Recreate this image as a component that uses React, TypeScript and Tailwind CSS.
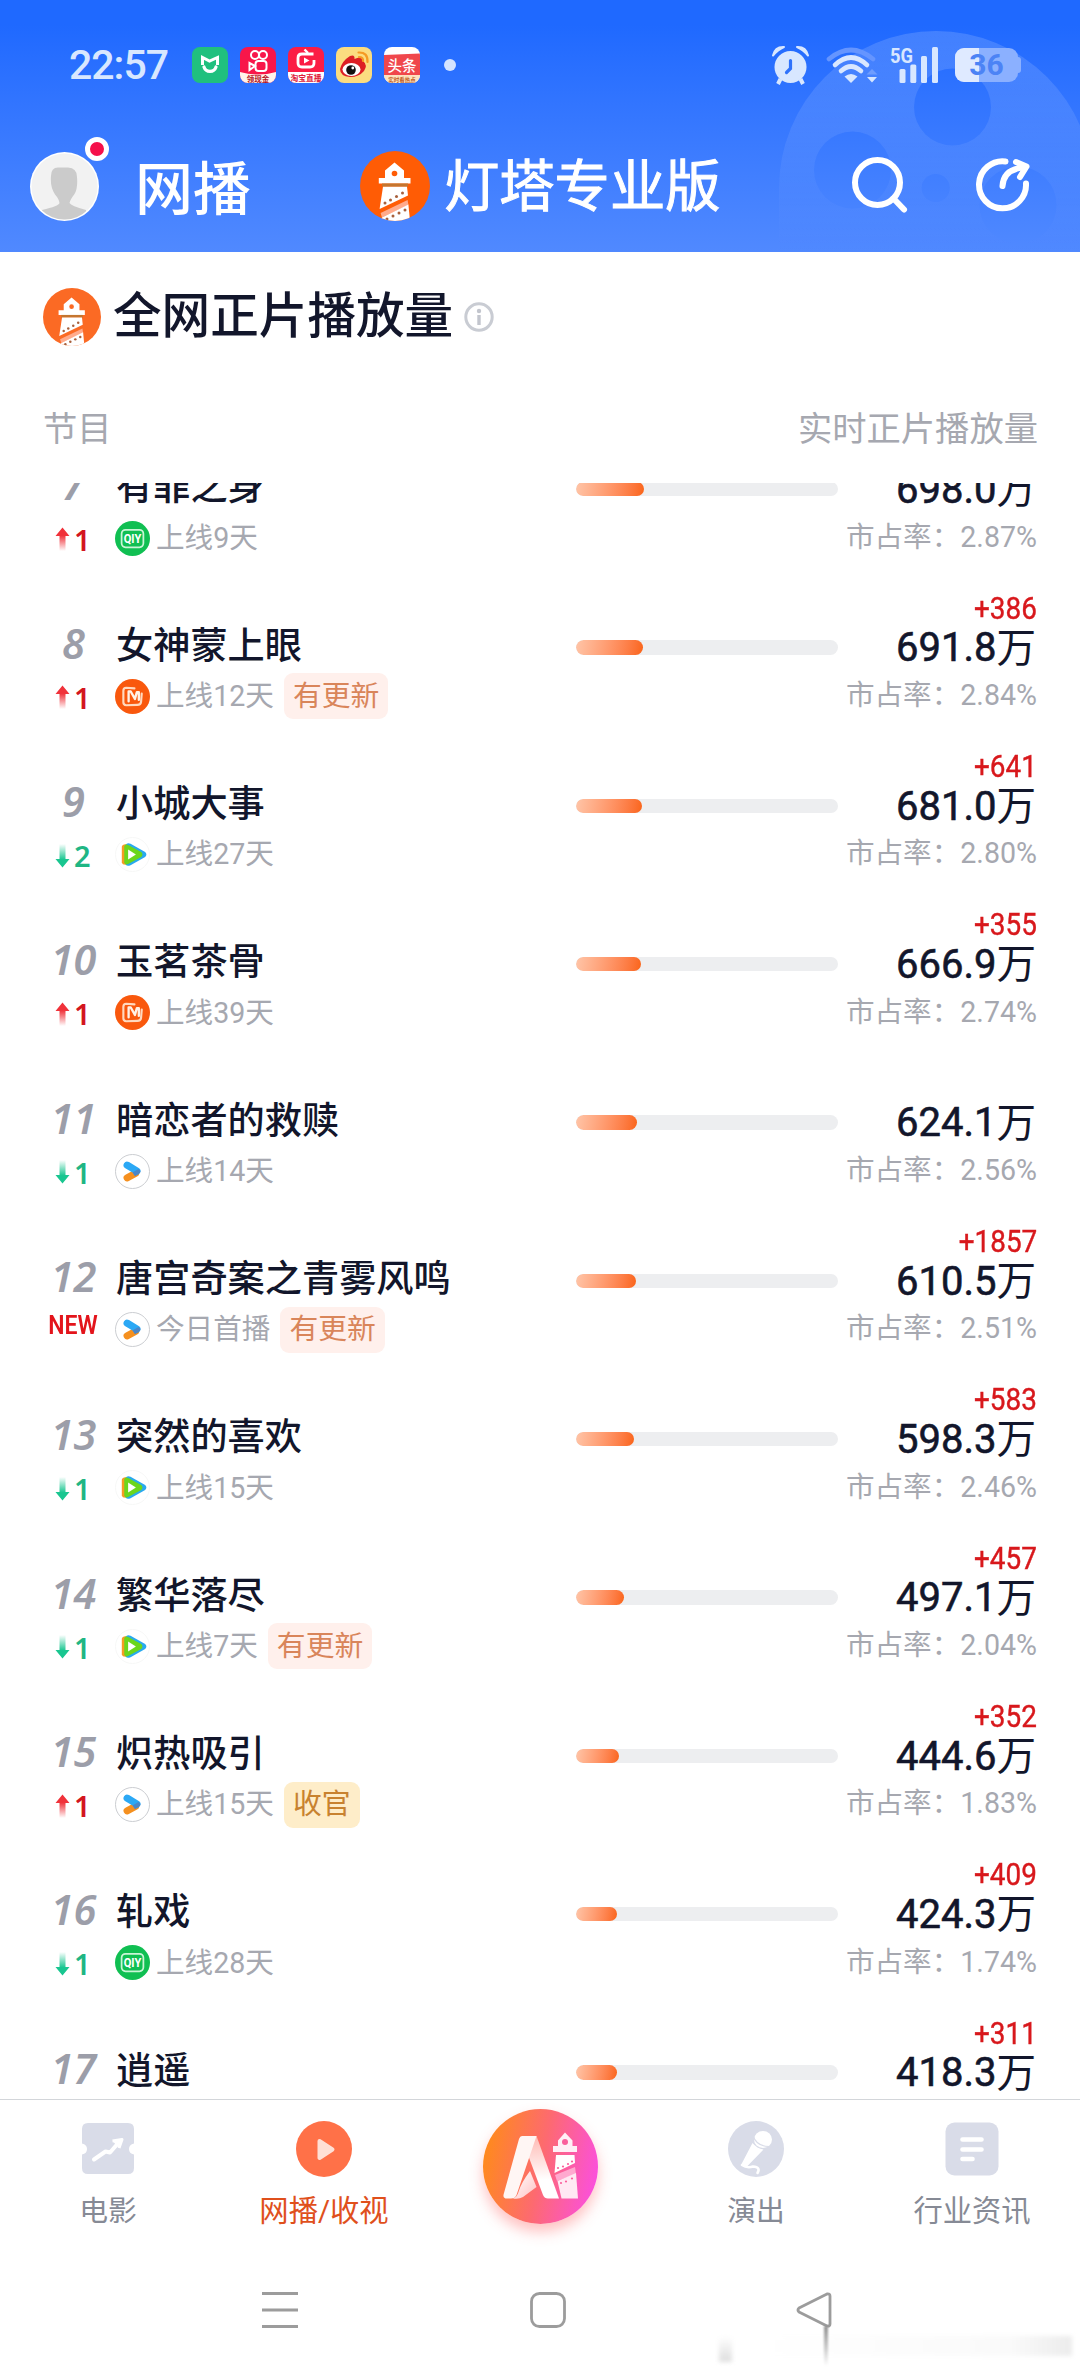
import clsx from 'clsx';

type Platform = 'iqiyi' | 'mango' | 'tencent' | 'youku';

interface Show {
  rank: number;
  title: string;
  platform: Platform;
  online: string;
  change: number | 'NEW';
  tag?: 'update' | 'finale';
  delta?: string;
  views: string;
  share: string;
  bar: number;
}

const shows: Show[] = [
  { rank: 7, title: '有罪之身', platform: 'iqiyi', online: '上线9天', change: 1, views: '698.0', share: '2.87%', bar: 68 },
  { rank: 8, title: '女神蒙上眼', platform: 'mango', online: '上线12天', change: 1, tag: 'update', delta: '+386', views: '691.8', share: '2.84%', bar: 67 },
  { rank: 9, title: '小城大事', platform: 'tencent', online: '上线27天', change: -2, delta: '+641', views: '681.0', share: '2.80%', bar: 66 },
  { rank: 10, title: '玉茗茶骨', platform: 'mango', online: '上线39天', change: 1, delta: '+355', views: '666.9', share: '2.74%', bar: 65 },
  { rank: 11, title: '暗恋者的救赎', platform: 'youku', online: '上线14天', change: -1, views: '624.1', share: '2.56%', bar: 61 },
  { rank: 12, title: '唐宫奇案之青雾风鸣', platform: 'youku', online: '今日首播', change: 'NEW', tag: 'update', delta: '+1857', views: '610.5', share: '2.51%', bar: 60 },
  { rank: 13, title: '突然的喜欢', platform: 'tencent', online: '上线15天', change: -1, delta: '+583', views: '598.3', share: '2.46%', bar: 58 },
  { rank: 14, title: '繁华落尽', platform: 'tencent', online: '上线7天', change: -1, tag: 'update', delta: '+457', views: '497.1', share: '2.04%', bar: 48 },
  { rank: 15, title: '炽热吸引', platform: 'youku', online: '上线15天', change: 1, tag: 'finale', delta: '+352', views: '444.6', share: '1.83%', bar: 43 },
  { rank: 16, title: '轧戏', platform: 'iqiyi', online: '上线28天', change: -1, delta: '+409', views: '424.3', share: '1.74%', bar: 41 },
  { rank: 17, title: '逍遥', platform: 'iqiyi', online: '', change: 0, delta: '+311', views: '418.3', share: '', bar: 41 },
];

function LighthouseLogo({ id, color, className }: { id: string; color: string; className: string }) {
  return (
    <svg viewBox="0 0 70 70" className={className}>
      <clipPath id={id}>
        <circle cx="35" cy="35" r="35" />
      </clipPath>
      <g clipPath={`url(#${id})`}>
        <rect width="70" height="70" fill={color} />
        <path d="M34.5 11.5 L44 19.5 V27 H50.5 V32.5 H18.8 V27 H25 V19.5 Z" fill="#fff" />
        <rect x="22" y="32.5" width="26" height="3.2" fill="#c4762f" />
        <path d="M23 35.7 H47 L48 44.5 L19.6 58 Z" fill="#fff" />
        <path d="M47.6 49 L48.4 54 L22 66.5 L20.6 62 Z" fill="#ffab8c" />
        <path d="M48.4 53.5 L50 70 H20 L22 66.5 Z" fill="#fff" />
        <circle cx="34.5" cy="22.5" r="2.8" fill={color} />
        <g fill="#a8603c">
          <circle cx="25" cy="52" r="1.5" />
          <circle cx="30.5" cy="49" r="1.5" />
          <circle cx="36.5" cy="45.5" r="1.5" />
          <circle cx="42.5" cy="42" r="1.5" />
          <circle cx="27" cy="68" r="1.5" />
          <circle cx="33" cy="65" r="1.5" />
          <circle cx="39" cy="62" r="1.5" />
          <circle cx="45" cy="59" r="1.5" />
        </g>
      </g>
    </svg>
  );
}

function ReelBackdrop() {
  return (
    <svg viewBox="0 0 310 252" className="absolute top-0 right-0 h-[252px] w-[310px]">
      <defs>
        <linearGradient id="reelFade" x1="0" y1="0" x2="0" y2="252" gradientUnits="userSpaceOnUse">
          <stop offset="0.1" stopColor="#fff" stopOpacity="0.16" />
          <stop offset="0.45" stopColor="#fff" stopOpacity="0.1" />
          <stop offset="0.75" stopColor="#fff" stopOpacity="0.04" />
          <stop offset="1" stopColor="#fff" stopOpacity="0" />
        </linearGradient>
        <mask id="reelHoles">
          <rect width="310" height="252" fill="#fff" />
          <circle cx="182.5" cy="107" r="38.5" fill="#000" />
          <circle cx="82.5" cy="170" r="38.5" fill="#000" />
          <circle cx="165.7" cy="188" r="14" fill="#000" />
          <circle cx="248" cy="205" r="38.5" fill="#000" />
        </mask>
      </defs>
      <path d="M9 252 V188 A157 157 0 0 1 323 188 V252 Z" fill="url(#reelFade)" mask="url(#reelHoles)" />
    </svg>
  );
}

function StatusBar() {
  return (
    <div className="relative flex h-[130px] items-center pl-[69px] pr-[59px]">
      <span className="w-[123px] text-[41px] font-medium leading-none tracking-[-1px] text-[#d8e7ff]">22:57</span>
      <div className="flex items-center gap-3">
        <svg viewBox="0 0 36 36" className="size-9">
          <rect width="36" height="36" rx="8" fill="#20c07e" />
          <path d="M10.5 18 V10.5 L17.5 14 L25.5 10.5 V18" fill="none" stroke="#fff" strokeWidth="3" />
          <path d="M12 20 A6.3 6.3 0 0 0 24 20" fill="none" stroke="#fff" strokeWidth="3.2" strokeLinecap="round" />
        </svg>
        <svg viewBox="0 0 36 36" className="size-9">
          <clipPath id="ks">
            <rect width="36" height="36" rx="8" />
          </clipPath>
          <g clipPath="url(#ks)">
            <rect width="36" height="36" fill="#f8164a" />
            <path d="M0 25 Q18 30 36 25 V36 H0 Z" fill="#fff3ea" />
            <g fill="none" stroke="#fff" strokeWidth="2">
              <circle cx="15" cy="8" r="4" />
              <circle cx="23" cy="8" r="4" />
              <rect x="15.5" y="14" width="11" height="10" rx="3" />
              <path d="M15 19 L9.5 16 V23 Z" />
            </g>
            <text x="18" y="34.5" textAnchor="middle" fontSize="7.5" fontWeight="700" fill="#b3121f">领现金</text>
          </g>
        </svg>
        <svg viewBox="0 0 36 36" className="size-9">
          <clipPath id="tb">
            <rect width="36" height="36" rx="8" />
          </clipPath>
          <g clipPath="url(#tb)">
            <rect width="36" height="36" fill="#fb1d45" />
            <rect y="25" width="36" height="11" fill="#fff" />
            <path d="M25.5 7 H14 Q10 7 10 11 V16 Q10 20 14 20 H22 Q26 20 26 16 V13" fill="none" stroke="#fff" strokeWidth="2.8" />
            <path d="M16.5 2.5 L20 6" stroke="#fff" strokeWidth="2.4" />
            <path d="M16 10.5 L21.5 13.5 L16 16.5 Z" fill="#fff" />
            <text x="18" y="33.5" textAnchor="middle" fontSize="7.8" fontWeight="700" fill="#e01b3c">淘宝直播</text>
          </g>
        </svg>
        <svg viewBox="0 0 36 36" className="size-9">
          <rect width="36" height="36" rx="8" fill="#fbdc80" />
          <path d="M4 22 Q6 14 14 9 Q19 7 18.5 12 Q26 8 27 14 Q32 18 28 24 Q23 30 14 30 Q4 29 4 22 Z" fill="#dd1f24" />
          <ellipse cx="15.5" cy="22.5" rx="9" ry="6.5" fill="#fff" />
          <circle cx="15" cy="23" r="4.8" fill="#111" />
          <circle cx="16.8" cy="21" r="1.4" fill="#fff" />
          <path d="M22.5 5.5 Q32 5 31.5 15 M23 10 Q27.5 10 27 14" fill="none" stroke="#f59a23" strokeWidth="2.2" strokeLinecap="round" />
        </svg>
        <svg viewBox="0 0 36 36" className="size-9">
          <clipPath id="tt">
            <rect width="36" height="36" rx="8" />
          </clipPath>
          <g clipPath="url(#tt)">
            <rect width="36" height="36" fill="#fff" />
            <path d="M0 8 L36 6.5 V28 H0 Z" fill="#f0474c" />
            <rect y="28" width="36" height="8" fill="#fde3c0" />
            <text x="18" y="23.5" textAnchor="middle" fontSize="14.5" fontWeight="500" fill="#fff">头条</text>
            <text x="18" y="34.5" textAnchor="middle" fontSize="5.5" fontWeight="700" fill="#c05a1c">实时看热点</text>
          </g>
        </svg>
      </div>
      <span className="ml-6 size-3 rounded-full bg-[#d4e4ff]" />

      <div className="ml-auto flex items-center">
        <svg viewBox="0 0 37 40" className="h-10 w-[37px]">
          <circle cx="18.5" cy="22" r="16" fill="#d8e7ff" />
          <path d="M1 10.5 Q3 1.5 12 2 Q6 4.5 1 10.5 Z M36 10.5 Q34 1.5 25 2 Q31 4.5 36 10.5 Z" stroke="#d8e7ff" strokeWidth="2" strokeLinejoin="round" fill="#d8e7ff" />
          <path d="M8.5 34 L6 39 M28.5 34 L31 39" stroke="#d8e7ff" strokeWidth="4" />
          <path d="M18.5 15.5 V23.5 L14.5 27.5" fill="none" stroke="#2f72fb" strokeWidth="3.2" strokeLinecap="round" />
        </svg>
        <svg viewBox="0 0 52 38" className="ml-[17px] h-[38px] w-[52px]">
          <g fill="none" strokeLinecap="round" strokeWidth="4.6">
            <path d="M3 13 Q25 -5 47 13" stroke="#6595ff" />
            <path d="M9 19 Q25 4 41 19" stroke="#d8e7ff" />
            <path d="M15 25 Q25 16 35 25" stroke="#d8e7ff" />
          </g>
          <path d="M25 37 L18.5 30.5 Q25 25.5 31.5 30.5 Z" fill="#d8e7ff" />
          <path d="M40.5 28.5 L46 23 L51.5 28.5 Z" fill="#6f9dff" />
          <path d="M41 31 H51 L46 36.5 Z" fill="#d8e7ff" />
        </svg>
        <svg viewBox="0 0 50 40" className="ml-3 h-10 w-[50px] overflow-visible">
          <text x="0" y="18" fontSize="21" fontWeight="700" fill="#d8e7ff" textLength="23" lengthAdjust="spacingAndGlyphs">5G</text>
          <g fill="#d8e7ff">
            <rect x="9.5" y="24" width="6" height="14" rx="1.5" />
            <rect x="20.3" y="19.5" width="6" height="18.5" rx="1.5" />
            <rect x="31" y="11" width="6" height="27" rx="1.5" />
            <rect x="42" y="2" width="6" height="36" rx="1.5" />
          </g>
        </svg>
        <div className="relative ml-[15px] flex h-[34px] w-[63px] items-center justify-center overflow-hidden rounded-[9px] bg-[#8bb0ff]">
          <span className="absolute inset-y-0 left-0 w-6 bg-[#dfeaff]" />
          <span className="relative text-[30px] font-bold leading-none text-[#4c83f5]">36</span>
        </div>
        <span className="h-4 w-[3px] rounded-r bg-[#8bb0ff]" />
      </div>
    </div>
  );
}

function Header() {
  return (
    <header className="relative h-[252px] bg-linear-to-b from-[#1f69ff] from-10% to-[#5089ff]">
      <ReelBackdrop />
      <StatusBar />
      <div className="relative flex h-[112px] items-center pl-[30px]">
        <div className="relative size-[69px]">
          <svg viewBox="0 0 69 69" className="size-[69px]">
            <clipPath id="avatar">
              <circle cx="34.5" cy="34.5" r="33" />
            </clipPath>
            <circle cx="34.5" cy="34.5" r="34.5" fill="#fff" />
            <g clipPath="url(#avatar)">
              <rect width="69" height="69" fill="#f2f2f2" />
              <path d="M21 24 Q21 15.5 28 15.5 H38 Q47 16 47 25 Q48 36 44.5 42 Q40 48 39.5 51 Q41 54 56 58 V69 H12 V58 Q29 54 29.5 51 Q29 47 25 42.5 Q20 35 21 24 Z" fill="#cbcbcb" />
            </g>
          </svg>
          <span className="absolute -top-[15px] left-[55px] size-6 rounded-full border-5 border-white bg-[#f5104a]" />
        </div>
        <span className="ml-[36px] w-[225px] pt-[7px] text-[58px] font-medium leading-none text-white">网播</span>
        <LighthouseLogo id="headLogo" color="#ff5c05" className="size-[70px]" />
        <span className="ml-[14px] pt-[4px] text-[55.3px] font-normal leading-none text-white [-webkit-text-stroke:1px_#fff]">灯塔专业版</span>
        <svg viewBox="0 0 60 60" className="ml-[130px] size-[60px]">
          <circle cx="26.5" cy="26.5" r="22.5" fill="none" stroke="#fff" strokeWidth="6" />
          <path d="M42.5 42.5 L53 53.5" stroke="#fff" strokeWidth="6" strokeLinecap="round" />
        </svg>
        <svg viewBox="0 0 60 60" className="ml-[62px] size-[60px]">
          <g fill="none" stroke="#fff" strokeWidth="6" strokeLinecap="round" strokeLinejoin="round">
            <path d="M32.5 5.5 A23.5 23.5 0 1 0 53 27.5" />
            <path d="M29.5 30 Q30.5 13.5 50 11.5" />
            <path d="M43 6 L53.5 10.5 L47 21" />
          </g>
        </svg>
      </div>
    </header>
  );
}

function PlatformIcon({ platform }: { platform: Platform }) {
  if (platform === 'iqiyi') {
    return (
      <svg viewBox="0 0 36 36" className="size-[35px]">
        <circle cx="18" cy="18" r="18" fill="#10bf52" />
        <rect x="6.8" y="9" width="22.4" height="18" rx="4" fill="none" stroke="#c9f5d6" strokeWidth="1.8" />
        <text x="18" y="22.8" textAnchor="middle" fontSize="13.5" fontWeight="700" fill="#fff" textLength="18" lengthAdjust="spacingAndGlyphs">QIY</text>
      </svg>
    );
  }
  if (platform === 'mango') {
    return (
      <svg viewBox="0 0 36 36" className="size-[35px]">
        <circle cx="18" cy="18" r="18" fill="#f9580d" />
        <path d="M20 9.6 L11.500 9 Q8.600 9 8.600 12 V24 Q8.600 26.800 11.500 27 L23 26.600 Q26.500 26.500 26.800 23.500 L27.500 15" fill="none" stroke="#ffd9bf" strokeWidth="2.200" strokeLinecap="round" />
        <path d="M14 23 V12.800 H16.200 L20.500 20.500 L22.500 13.500 H24.500 V21.500" fill="none" stroke="#fff1e6" strokeWidth="2.400" strokeLinecap="round" strokeLinejoin="round" />
      </svg>
    );
  }
  if (platform === 'tencent') {
    return (
      <svg viewBox="0 0 36 36" className="size-[35px]">
        <circle cx="18" cy="18" r="17.5" fill="#fff" stroke="#f6f7f6" />
        <path d="M7 10 Q7.500 7 12 7.500 L12 28.500 Q7.500 29 7 26 Z" fill="#f59b23" />
        <path d="M11 8.500 Q12 5.500 16 7 L31 15.500 Q33.500 18 31 20.500 L16 29 Q12 30.500 11 28 Z" fill="#28a9ee" />
        <path d="M9.500 10 Q10 6.500 14 8.500 L27 15.500 Q29.500 18 27 20.500 L14 27.500 Q10 29.500 9.500 26 Z" fill="#6bd61c" />
        <path d="M13.500 12.800 L21.500 18 L13.500 23.200 Z" fill="#fff" />
      </svg>
    );
  }
  return (
    <svg viewBox="0 0 36 36" className="size-[35px]">
      <circle cx="18" cy="18" r="17.5" fill="#fff" stroke="#c9cbd0" />
      <path d="M12.5 24.5 L21 20" stroke="#f5901f" strokeWidth="7.4" strokeLinecap="round" />
      <path d="M12.5 11.5 L22.5 17.5" stroke="#2ba8f5" strokeWidth="7.4" strokeLinecap="round" />
      <path d="M18 19 L24 15.5 Q28 18 24.5 20.5 L20.5 23 Z" fill="#4a86c8" />
    </svg>
  );
}

function RankChange({ change }: { change: number | 'NEW' }) {
  if (change === 'NEW') {
    return (
      <div className="mt-[-5px] flex h-9 w-full items-center justify-center">
        <span className="-ml-[3px] scale-x-[0.92] text-[25px] font-semibold leading-none text-[#e3141b]">NEW</span>
      </div>
    );
  }
  const up = change > 0;
  return (
    <div className="flex h-9 w-full items-center gap-1 pl-[13px]">
      <svg viewBox="0 0 15 24" className={clsx('h-6 w-[15px]', !up && 'rotate-180')}>
        <defs>
          <linearGradient id={up ? 'riseFade' : 'fallFade'} x1="0" y1="0" x2="0" y2="24" gradientUnits="userSpaceOnUse">
            <stop offset="0.35" stopColor={up ? '#f0323a' : '#19c690'} />
            <stop offset="1" stopColor={up ? '#f0323a' : '#19c690'} stopOpacity="0" />
          </linearGradient>
        </defs>
        <path d="M7.5 0.5 L14.5 9 H10.5 V24 H4.5 V9 H0.5 Z" fill={up ? 'url(#riseFade)' : 'url(#fallFade)'} />
      </svg>
      <span className={clsx("font-['Noto_Sans'] text-[29px] font-semibold leading-none", up ? 'text-[#d3161e]' : 'text-[#1fb684]')}>
        {Math.abs(change)}
      </span>
    </div>
  );
}

function ShowRow({ show }: { show: Show }) {
  return (
    <li className="flex h-[158.33px] shrink-0 items-start">
      <div className="flex w-[115px] flex-col pl-[42px]">
        <div className="mt-[54px] flex h-[42px] w-[63px] items-center justify-center">
          <span className="font-['Noto_Sans'] text-[41.5px] font-semibold italic leading-none text-[#9c9ea9]">{show.rank}</span>
        </div>
        <div className="mt-[15px] w-[64px]">{show.change !== 0 && <RankChange change={show.change} />}</div>
      </div>
      <div className="w-[461px]">
        <div className="mt-[55px] ml-[1px] flex h-[46px] items-center whitespace-nowrap text-[37.2px] font-medium leading-none text-[#12162b]">
          {show.title}
        </div>
        {show.online && (
          <div className="mt-[4px] flex h-[46px] items-center whitespace-nowrap">
            <PlatformIcon platform={show.platform} />
            <span className="ml-[6px] text-[28.6px] leading-none text-[#a6a8b0]">{show.online}</span>
            {show.tag && (
              <span
                className={clsx(
                  'ml-[10px] flex h-[46px] items-center rounded-[9px] px-[9px] text-[28.8px] leading-none',
                  show.tag === 'update' ? 'bg-[#fff0ec] text-[#d9855a]' : 'bg-[#feedc9] text-[#c8822f]'
                )}
              >
                {show.tag === 'update' ? '有更新' : '收官'}
              </span>
            )}
          </div>
        )}
      </div>
      <div className="mt-[72px] h-[14.4px] w-[262px] overflow-hidden rounded-full bg-[#edeef0]">
        <div className="h-full rounded-full bg-linear-100 from-[#ffc5a8] to-[#fa6414]" style={{ width: show.bar }} />
      </div>
      <div className="flex w-[199px] flex-col items-end whitespace-nowrap">
        <div className="mt-6 flex h-8 items-center">
          <span className="origin-right scale-x-90 text-[31px] leading-none text-[#d8181c] [-webkit-text-stroke:0.4px_#d8181c]">{show.delta}</span>
        </div>
        <div className="mt-[2px] flex h-[44px] items-center pr-[1px] text-[40px] leading-none text-[#12162b]">
          <span className="[-webkit-text-stroke:0.6px_#12162b]">{show.views}</span>
          <span className="text-[39.5px]">万</span>
        </div>
        <div className="mt-[7px] flex h-9 items-center text-[28.6px] leading-none text-[#a6a8b0]">
          {show.share && `市占率：${show.share}`}
        </div>
      </div>
    </li>
  );
}

function AiButton() {
  return (
    <div className="mt-[9px] size-[115px] rounded-full shadow-[0_8px_14px_rgba(255,80,80,0.35)]">
      <svg viewBox="0 0 115 115" className="size-[115px]">
        <defs>
          <linearGradient id="aiBg" x1="0" y1="0.4" x2="1" y2="0.6">
            <stop offset="0" stopColor="#ff8a1c" />
            <stop offset="0.5" stopColor="#fd6a70" />
            <stop offset="1" stopColor="#fb50dd" />
          </linearGradient>
          <linearGradient id="aiLeg" x1="0" y1="0" x2="0" y2="1">
            <stop offset="0" stopColor="#ffb9b3" />
            <stop offset="0.7" stopColor="#fff" />
          </linearGradient>
          <linearGradient id="aiFold" x1="0" y1="0" x2="1" y2="1">
            <stop offset="0" stopColor="#fff" />
            <stop offset="1" stopColor="#ffc2c4" />
          </linearGradient>
        </defs>
        <circle cx="57.5" cy="57.5" r="57.5" fill="url(#aiBg)" />
        <path d="M42 27 H53.5 L76 89.5 H65 Q61.5 89.5 60 86 L42 38 Z" fill="url(#aiLeg)" />
        <path d="M39 27 H53.5 L33.5 86 Q32 89.5 28 89.5 H24 Q19 89.5 21 84 L36 30 Q37 27 39 27 Z" fill="#fff6f4" />
        <path d="M47 62 L53.5 78 L40 88 Q36 90.5 30 89.5 Q34 88 35.5 83 Q38 74 47 62 Z" fill="url(#aiFold)" />
        <path d="M82 23.5 L89.5 31.5 V37 H94 V43 H70 V37 H75 V31.5 Z" fill="#fff0f6" />
        <circle cx="82" cy="33" r="3" fill="#fa5f9c" />
        <path d="M73 46 H91.5 L92 54 L71.5 64 Z" fill="#fff" />
        <path d="M92 58 L93 65 L74 72 L72 66 Z" fill="#ffa9cf" />
        <path d="M93 64 L95 89.5 H78.5 L74.5 72 Z" fill="#ffe9f3" />
        <g fill="#fa5f9c">
          <circle cx="75" cy="59" r="1.1" />
          <circle cx="80" cy="57.5" r="1.1" />
          <circle cx="85" cy="55" r="1.1" />
          <circle cx="89" cy="52.5" r="1.1" />
          <circle cx="78" cy="74" r="1.1" />
          <circle cx="83" cy="72.5" r="1.1" />
          <circle cx="89" cy="69.5" r="1.1" />
        </g>
      </svg>
    </div>
  );
}

function TabBar() {
  const item = 'flex w-[216px] flex-col items-center gap-[14px] pt-[21px] text-[28.8px] leading-[40px] text-[#868a95]';
  return (
    <nav className="flex h-[145px] border-t border-[#d3d6da]">
      <div className={item}>
        <svg viewBox="0 0 56 56" className="size-14">
          <path d="M8 2 H48 Q54 2 54 8 V22.5 Q49 23.5 49 28 Q49 32.5 54 33.5 V47 Q54 53 48 53 H8 Q2 53 2 47 V33.5 Q7 32.5 7 28 Q7 23.5 2 22.5 V8 Q2 2 8 2 Z" fill="#d9dce8" />
          <path d="M14 38.5 L25.5 30.5 L30 31.5 L40 20" fill="none" stroke="#fff" strokeWidth="4" strokeLinecap="round" strokeLinejoin="round" />
          <path d="M32.5 20 L42 18.5 L39 27" fill="#fff" stroke="#fff" strokeWidth="3" strokeLinejoin="round" />
        </svg>
        电影
      </div>
      <div className={clsx(item, 'text-[#e0501c]!')}>
        <svg viewBox="0 0 56 56" className="size-14">
          <circle cx="28" cy="28" r="28" fill="#ff7148" />
          <path d="M23.5 20 L36.5 28.5 L23.5 37 Z" fill="#ffe0d5" stroke="#ffe0d5" strokeWidth="4" strokeLinejoin="round" />
        </svg>
        <span className="text-[29.3px]">网播/收视</span>
      </div>
      <div className="flex w-[216px] justify-center">
        <AiButton />
      </div>
      <div className={item}>
        <svg viewBox="0 0 56 56" className="size-14">
          <circle cx="28" cy="28" r="28" fill="#d9dce8" />
          <ellipse cx="35" cy="18.5" rx="9" ry="8.5" fill="#fff" />
          <path d="M25 14.5 Q28.5 25.5 41.5 25.5" fill="none" stroke="#d9dce8" strokeWidth="1.2" />
          <path d="M24.5 22 Q29 27.5 35.5 28.5 L19 45.5 Q15 47 13.5 43 Z" fill="#fff" />
          <path d="M14 44 Q19 47.5 25 45.5 Q33 46 29.5 52" fill="none" stroke="#fff" strokeWidth="2.6" strokeLinecap="round" />
        </svg>
        演出
      </div>
      <div className={item}>
        <svg viewBox="0 0 56 56" className="size-14">
          <rect x="1.5" y="1.5" width="53" height="53" rx="9" fill="#d9dce8" />
          <path d="M18.5 18.5 H37.5 M18.5 28.5 H37.5 M18.5 38 H28.5" stroke="#fff" strokeWidth="4.6" strokeLinecap="round" />
        </svg>
        <span className="text-[29.3px]">行业资讯</span>
      </div>
    </nav>
  );
}

function SystemNav() {
  return (
    <div className="relative flex h-[132px] items-center pl-[262px]">
      <svg viewBox="0 0 36 36" className="size-9">
        <path d="M0 1.5 H36 M0 18 H36 M0 34.5 H36" stroke="#9c9c9c" strokeWidth="3" />
      </svg>
      <svg viewBox="0 0 36 36" className="ml-[232px] size-9">
        <rect x="1.5" y="1.5" width="33" height="33" rx="8" fill="none" stroke="#9c9c9c" strokeWidth="2.8" />
      </svg>
      <svg viewBox="0 0 36 36" className="ml-[230px] size-9">
        <path d="M31 2 L3 16 Q1 18 3 20 L31 34 Q34 34.5 34 32 V4 Q34 1.5 31 2 Z" fill="none" stroke="#9c9c9c" strokeWidth="2.8" strokeLinejoin="round" />
      </svg>
      {/* faint smear along the bottom edge */}
      <div className="absolute top-[92px] right-2 flex h-[26px] w-[353px] items-stretch gap-[28px] blur-[2px]">
        <span className="w-[13px] bg-linear-to-b from-white to-[#dedede]" />
        <span className="h-5 flex-1 bg-linear-to-r from-white via-[#fafafa] via-80% to-[#ececec]" />
      </div>
      <span className="absolute top-[82px] left-[824px] h-10 w-[4px] bg-linear-to-b from-[#8f8f8f] to-white blur-[1px]" />
    </div>
  );
}

export default function App() {
  return (
    <div className="flex h-[2376px] w-[1080px] flex-col overflow-hidden bg-white font-[Roboto,'Noto_Sans_CJK_SC',sans-serif]">
      <Header />
      <main className="flex h-[1847px] flex-col">
        <div className="flex h-[129px] items-center pl-[43px]">
          <LighthouseLogo id="titleLogo" color="#fb6a24" className="size-[58px]" />
          <h1 className="ml-[12px] pt-[2px] text-[48.6px] font-medium leading-none text-[#12162b]">全网正片播放量</h1>
          <svg viewBox="0 0 30 30" className="ml-[11px] size-[30px]">
            <circle cx="15" cy="15" r="13.2" fill="none" stroke="#c9ccd3" strokeWidth="3" />
            <circle cx="15" cy="9" r="2.2" fill="#c2c5cd" />
            <rect x="13.3" y="13" width="3.4" height="10" fill="#c2c5cd" />
          </svg>
        </div>
        <div className="flex h-[102px] items-center justify-between pb-[6px] pl-[43px] pr-[42px] text-[34.3px] leading-none text-[#a6a8b0]">
          <span>节目</span>
          <span>实时正片播放量</span>
        </div>
        <div className="min-h-0 flex-1 overflow-hidden">
          <ul className="-mt-[73px] flex flex-col">
            {shows.map((show) => (
              <ShowRow key={show.rank} show={show} />
            ))}
          </ul>
        </div>
      </main>
      <TabBar />
      <SystemNav />
    </div>
  );
}
